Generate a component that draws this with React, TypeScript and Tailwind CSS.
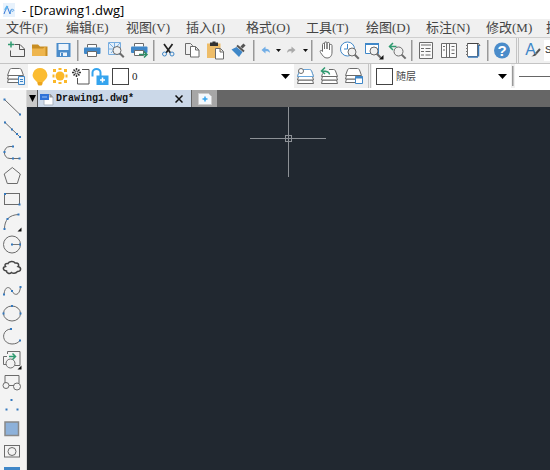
import type { ReactNode } from "react"

interface IconProps {
  children: ReactNode
  width?: number
  height?: number
}

interface ToolProps {
  label: string
  children: ReactNode
}

const LINE = "#6b6b6b"
const BLUE = "#3f87c8"

function Icon({ children, width = 24, height = 24 }: IconProps) {
  return (
    <svg width={width} height={height} viewBox={`0 0 ${width} ${height}`} fill="none" stroke={LINE} aria-hidden="true">
      {children}
    </svg>
  )
}

function Tool({ label, children }: ToolProps) {
  return (
    <button type="button" aria-label={label} title={label} className="h-6 w-6 shrink-0 hover:bg-sky-100">
      <Icon>{children}</Icon>
    </button>
  )
}

// 20px buttons: undo/redo and the layer state toggles
function SmallTool({ label, children }: ToolProps) {
  return (
    <button type="button" aria-label={label} title={label} className="h-6 w-5 shrink-0 hover:bg-sky-100">
      <Icon width={20}>{children}</Icon>
    </button>
  )
}

function Caret({ label }: { label: string }) {
  return (
    <button type="button" aria-label={label} className="h-6 w-[7px] shrink-0">
      <Icon width={7}>
        <path d="M0 11h5l-2.5 3z" fill="#111" stroke="none" />
      </Icon>
    </button>
  )
}

function Separator() {
  return (
    <div className="flex w-1 shrink-0 justify-center self-stretch py-0.5">
      <div className="w-px bg-[#999]" />
      <div className="w-px bg-[#c4c4c4]" />
    </div>
  )
}

function Grip() {
  return (
    <div className="flex w-1.5 shrink-0 justify-center gap-px self-stretch">
      <div className="w-px bg-[#c4c4c4]" />
      <div className="w-px bg-[#c4c4c4]" />
    </div>
  )
}

const menus = [
  { name: "文件", key: "F" },
  { name: "编辑", key: "E" },
  { name: "视图", key: "V" },
  { name: "插入", key: "I" },
  { name: "格式", key: "O" },
  { name: "工具", key: "T" },
  { name: "绘图", key: "D" },
  { name: "标注", key: "N" },
  { name: "修改", key: "M" },
  { name: "扩展工具", key: "X" },
]

function Dots({ points }: { points: number[][] }) {
  return (
    <g fill="#3478bd" stroke="none">
      {points.map(([x, y]) => (
        <rect key={`${x}-${y}`} x={x - 1} y={y - 1} width="2" height="2" />
      ))}
    </g>
  )
}

const drawTools = [
  { label: "Line", icon: <><path d="M4.5 4.5l15.500 15" /><Dots points={[[4.5, 4.5], [20, 19.5]]} /></> },
  { label: "Construction line", icon: <><path d="M4.500 4l15.500 15" /><Dots points={[[5, 4.5], [12, 11.500], [17, 16], [20, 19]]} /></> },
  { label: "Polyline", icon: <><path d="M13 5.500H10C2.500 5.500 2.500 17.500 10 17.500H20" /><Dots points={[[13, 5.500], [4.500, 11], [13, 17.500], [19.500, 17.500]]} /></> },
  { label: "Polygon", icon: <path d="M12.300 3.500l8 6.500-3 9.500H7.300L4.200 10z" /> },
  { label: "Rectangle", icon: <><rect x="4.500" y="6.500" width="15" height="11" /><Dots points={[[5, 7], [19.500, 17.500]]} /></> },
  { label: "Arc", icon: <><path d="M4.500 19C4.500 10 9 5 18.500 4.500" /><Dots points={[[4.500, 19], [7.500, 9], [18.500, 4.500]]} /><path d="M21.500 17.500v4h-4z" fill="#111" stroke="none" /></> },
  { label: "Circle", icon: <><circle cx="12" cy="11.500" r="8.500" /><path d="M12 11.500h8" stroke="#777" /><Dots points={[[12, 11.500], [20, 11.500]]} /></> },
  { label: "Revision cloud", icon: <path d="M8 7.500C9 5 14 5 15 7C18.500 6.500 19.500 9 18 10.500C22 11.500 21 15.500 17.500 15.500C15.500 18 12.500 17.500 11.500 16.500C9.500 18.500 6.500 17 6.500 15C2.500 14.500 2.500 11 5.500 10.500C4 8.500 6 7 8 7.500z" stroke="#444" strokeWidth="1.500" /> },
  { label: "Spline", icon: <><path d="M4 15C5 7 9.500 7 12 12C14.500 17 19.500 17 20.500 8" /><Dots points={[[4, 15.500], [12, 12], [20.500, 8]]} /></> },
  { label: "Ellipse", icon: <><ellipse cx="12" cy="11.500" rx="8.500" ry="7.500" /><Dots points={[[12, 4], [3.500, 11.500], [20.500, 11.500]]} /></> },
  { label: "Ellipse arc", icon: <><path d="M11 4C1 4.500 1 18.500 12 19C16 19 18.500 17.500 20 15.500" /><Dots points={[[11, 4], [20, 15.500]]} /></> },
  {
    label: "Insert block",
    icon: (
      <>
        <path d="M7.500 6V3.500h12.500v14H15M7 8.500H3.500v8h3" />
        <circle cx="10.500" cy="15.500" r="4.500" fill="#f3f3f3" />
        <path d="M9 8.500h6M12.500 5.500l3 3-3 3" stroke="#2f9a70" strokeWidth="1.500" />
        <path d="M21.500 17.500v4h-4z" fill="#111" stroke="none" />
      </>
    ),
  },
  {
    label: "Make block",
    icon: (
      <>
        <path d="M5 12V4.500h14V12M9 14.500h5" />
        <circle cx="6" cy="14.500" r="3" />
        <circle cx="17" cy="15.500" r="3.500" />
      </>
    ),
  },
  { label: "Point", icon: <Dots points={[[11.500, 6], [6.500, 15.500], [17.500, 15.500]]} /> },
  { label: "Hatch", icon: <rect x="5" y="5" width="13.500" height="13.500" fill="#8db1da" stroke="#888" strokeWidth="1.500" /> },
  { label: "Region", icon: <><rect x="4.500" y="5.500" width="15" height="11.500" /><circle cx="12" cy="11.500" r="4" /></> },
  { label: "Table", icon: <><path d="M4.500 5.500h15v14h-15zM4.500 13h15M12 8v12" /><path d="M4 4h16v4H4z" fill={BLUE} stroke="none" /></> },
]

function Magnifier({ x, y, r = 4.5 }: { x: number; y: number; r?: number }) {
  return (
    <>
      <circle cx={x} cy={y} r={r} fill="#f0f0f0" />
      <path d={`M${x + r * 0.7} ${y + r * 0.7}l4 4`} strokeWidth="2" />
    </>
  )
}

function TitleBar() {
  return (
    <header className="flex h-[19px] shrink-0 items-center bg-white pl-[3px]">
      <Icon width={12} height={16}>
        <rect width="12" height="14" y="1" fill="#e8f2fc" stroke="none" />
        <path d="M1 12L4 4l3 8 1-4" stroke="#3a78d6" />
        <path d="M2 8l2.500-4" stroke="#5fb4ee" strokeWidth="2" />
        <path d="M7 12l1-4.500c3-1 4 1.500 1 2" stroke="#63a6e6" />
      </Icon>
      <h1 className="ml-[7px] whitespace-nowrap font-['Open_Sans','Noto_Sans',sans-serif] text-[13px] leading-[18px] text-black">
        - [Drawing1.dwg]
      </h1>
    </header>
  )
}

function MenuBar() {
  return (
    <nav className="flex h-[19px] shrink-0 items-center overflow-hidden border-b border-[#cfcfcf] pl-1.5">
      {menus.map((menu) => (
        <button
          key={menu.key}
          type="button"
          className="w-15 shrink-0 whitespace-nowrap text-left font-['Liberation_Serif','Noto_Sans_CJK_SC',serif] text-[13px] leading-[18px] text-[#444]"
        >
          {menu.name}({menu.key})
        </button>
      ))}
    </nav>
  )
}

function StandardToolbar() {
  return (
    <div role="toolbar" aria-label="Standard" className="flex h-[26px] shrink-0 overflow-hidden border-b border-[#c4c4c4] pl-1">
      <Tool label="New">
        <path d="M10.500 6.500h5.500l4.500 4.500v7.500h-14v-6M15.500 6.500v5h5" stroke="#555" />
        <path d="M7 3.500v6M4 6.500h6" stroke="#2f9a70" strokeWidth="1.500" />
      </Tool>
      <Tool label="Open">
        <path d="M4 6.500h6l2 2h7.500V18H4z" fill="#c88d22" stroke="none" />
        <path d="M4 10.500h11l2.500-2V18H4z" fill="#eeb54d" stroke="none" />
      </Tool>
      <Tool label="Save">
        <path d="M4.500 5h14v14h-14z" fill="#4b8cca" stroke="none" />
        <path d="M6.500 6h10v6h-10zM8 14.500h7V18H8z" fill="#edf4fb" stroke="none" />
        <path d="M9 15h2v3H9z" fill="#4b8cca" stroke="none" />
      </Tool>
      <Separator />
      <Tool label="Print">
        <path d="M7.500 9.500v-3h9v3" fill="#fff" />
        <rect x="4" y="9.500" width="16.500" height="6.500" rx="1" fill={BLUE} stroke="none" />
        <path d="M7.500 13.500h9v5h-9z" fill="#fff" />
      </Tool>
      <Tool label="Print preview">
        <path d="M4.500 4.500h12v12h-12z" fill="#e3effa" stroke="#79aee0" />
        <path d="M5 5l6 6M16 5l-9 10M10.500 5v6H5" stroke="#79aee0" />
        <Magnifier x={13} y={12.500} r={4} />
      </Tool>
      <Tool label="Plot">
        <path d="M6.500 8.500v-3h9v3" fill="#fff" />
        <rect x="3" y="8.500" width="16.500" height="6.500" rx="1" fill={BLUE} stroke="none" />
        <path d="M6.500 12.500h9v5h-9z" fill="#fff" />
        <path d="M11 16.500h8M16 13.500l3 3-3 3" stroke="#2f8f68" strokeWidth="1.500" />
      </Tool>
      <Separator />
      <Tool label="Cut">
        <path d="M8 6l6.500 9M16.500 6L10 15" stroke="#222" strokeWidth="1.700" />
        <circle cx="8.500" cy="16" r="2" stroke={BLUE} />
        <circle cx="16" cy="16" r="2" stroke={BLUE} />
      </Tool>
      <Tool label="Copy">
        <path d="M10 16.500H5.500v-11h5l2 2v1.500" />
        <path d="M10.500 8.500h5l3.500 3.500v7h-8.500zM15.500 8.500v3.500H19" fill="#fff" />
      </Tool>
      <Tool label="Paste">
        <path d="M3 5.500h13.500V20H3z" fill="#eebd69" stroke="none" />
        <path d="M6 4.500h2.500V3.500h3v1h2.500v3.500H6z" fill="#333" stroke="none" />
        <path d="M11.500 10.500h5l3 3v7.500h-8zM16 10.500v3.500h3.500" fill="#fff" />
      </Tool>
      <Tool label="Match properties">
        <path d="M16.500 6.500l-3 3" stroke="#555" strokeWidth="3" />
        <path d="M9 7.500l7 6" stroke="#555" strokeWidth="2" />
        <path d="M8.500 9l6 5-3.500 5L3.500 11.500z" fill={BLUE} stroke="none" />
      </Tool>
      <Separator />
      <SmallTool label="Undo">
        <path d="M5.500 12l4-3.500v2.200c3 0 4.500 1.500 4.500 4.300-1-1.500-2.500-2-4.500-1.700v2.200z" fill="#72aee6" stroke="none" />
      </SmallTool>
      <Caret label="Undo history" />
      <SmallTool label="Redo">
        <path d="M12.500 12l-4-3.500v2.200c-3 0-4.500 1.500-4.500 4.300 1-1.500 2.500-2 4.500-1.700v2.200z" fill="#aaa" stroke="none" />
      </SmallTool>
      <Caret label="Redo history" />
      <Separator />
      <Tool label="Pan">
        <path
          d="M8.500 13.500V6.500c0-1.500 2-1.500 2 0V11V5c0-1.500 2.500-1.500 2.500 0v6V5.500c0-1.500 2.500-1.500 2.500 0V12V7.500c0-1.500 2.500-1.500 2.500 0V14c0 4-2 6-5 6-3 0-4-2-6.500-5.500-1-2 .5-3 2-1z"
          fill="#fff"
        />
      </Tool>
      <Tool label="Zoom realtime">
        <circle cx="9.500" cy="11" r="7" fill="#fff" stroke={BLUE} />
        <path d="M9.500 6v5H6" stroke={BLUE} />
        <Magnifier x={14} y={14} r={4} />
      </Tool>
      <Tool label="Zoom window">
        <path d="M3.500 5.500h13v10h-13z" fill="#fff" stroke={BLUE} />
        <path d="M3 6h14" stroke={BLUE} strokeWidth="2" />
        <Magnifier x={12} y={13} r={4} />
        <path d="M21.500 17v4.500H17z" fill="#111" stroke="none" />
      </Tool>
      <Tool label="Zoom previous">
        <Magnifier x={12.500} y={13.500} />
        <path d="M10.500 8.500H3.500M7 5L3.500 8.500 7 12" stroke="#2f9a70" strokeWidth="1.500" />
      </Tool>
      <Separator />
      <Tool label="Properties">
        <path d="M5.500 4.500h13v16h-13z" fill="#fafafa" />
        <path d="M7 7h10M7 10.500h3M11.500 10.500h5M7 13.500h3M11.500 13.500h5M7 17h3M11.500 17h5" />
      </Tool>
      <Tool label="Design center">
        <path d="M3.500 5.500h15v14h-15zM8.500 5.500v14M11.500 5.500v14M13.500 8.500h3M13.500 12h3M13.500 15.500h3M5 8.500h2M5 12h2" fill="#fafafa" />
      </Tool>
      <Tool label="Tool palettes">
        <path d="M5.500 5.500h10v13h-10z" fill="#fff" />
        <path d="M5.500 5.500h11l1.500 2.500" stroke="#444" />
        <path d="M4 7.500h2M4 10.500h2M4 13.500h2M4 16.500h2" stroke="#777" />
        <path d="M16.500 7v11.500M6 19h10" stroke="#3a78b8" strokeWidth="1.500" />
      </Tool>
      <Separator />
      <Tool label="Help">
        <circle cx="12" cy="12.500" r="8" fill="#4b8cca" stroke="none" />
        <text x="12" y="18" textAnchor="middle" fontSize="15" fontWeight="700" fontFamily="Liberation Sans, sans-serif" fill="#fff" stroke="none">
          ?
        </text>
      </Tool>
      <Grip />
      <Tool label="Text style">
        <text x="10.500" y="17" textAnchor="middle" fontSize="16" fontFamily="Liberation Sans, sans-serif" fill={BLUE} stroke="none">
          A
        </text>
        <path d="M20 11l-4 4.500" stroke="#555" strokeWidth="2" />
        <path d="M11 18.500c2 0 2.500-3 4.500-3s1.500 3-4.500 3z" fill="#555" stroke="none" />
      </Tool>
      <select aria-label="Text style name" className="my-0.5 min-w-20 flex-1 appearance-none bg-white pl-px font-['Liberation_Mono',monospace] text-[11px] text-[#333]">
        <option>Standard</option>
      </select>
    </div>
  )
}

function LayerStack({ y = 0 }: { y?: number }) {
  return (
    <g transform={`translate(0 ${y})`} fill="#fff">
      <path d="M4.500 16l-1 3.500h16l-1-3.500z" />
      <path d="M4.500 12.500l-1 3.500h16l-1-3.500z" />
      <path d="M7.500 5.500h8c1 0 1.500.5 2 1.500l2 5.500h-16l2-5.500c.5-1 1-1.500 2-1.500z" />
    </g>
  )
}

function DropArrow() {
  return (
    <span className="pointer-events-none absolute inset-y-0 right-1 flex items-center">
      <svg width="9" height="5" viewBox="0 0 9 5" aria-hidden="true">
        <path d="M0 0h9L4.500 5z" fill="#000" />
      </svg>
    </span>
  )
}

function LayerToolbar() {
  return (
    <div role="toolbar" aria-label="Layers" className="flex h-[26px] shrink-0 overflow-hidden border-b-2 border-white pl-1">
      <Tool label="Layer manager">
        <LayerStack y={-1} />
        <path d="M14.500 12.500h6v8h-6z" fill="#e8f2fc" stroke={BLUE} />
        <path d="M16 15.500h3M16 17.500h3" stroke={BLUE} />
      </Tool>
      <div className="flex w-[266px] shrink-0 bg-white pl-0.5">
        <SmallTool label="Layer on">
          <path d="M10 4a7.500 7 0 0 1 5 12l-2.500 2.500h-5L5 16A7.500 7 0 0 1 10 4z" fill="#fbbc31" stroke="none" />
          <path d="M7.500 18h5v2l-1 1.500h-3l-1-1.500z" fill="#eba41c" stroke="none" />
        </SmallTool>
        <SmallTool label="Layer frozen">
          <circle cx="10" cy="12" r="4.500" fill="#fbb829" stroke="none" />
          <path d="M3 5h3v3H3zM14 5h3v3h-3zM3 16h3v3H3zM14 16h3v3h-3zM8.500 4h3v2h-3zM8.500 18h3v2h-3zM2.500 10.500h2v3h-2zM15.500 10.500h2v3h-2z" fill="#fbb829" stroke="none" />
        </SmallTool>
        <SmallTool label="Viewport frozen">
          <path d="M12 5.500h7v14.500H7.500v-6" stroke="#555" />
          <path d="M6.500 4v2M6.500 13v-2M2 8.500h2M11 8.500H9M3.500 5.500L5 7M9.500 5.500L8 7M3.500 11.500L5 10M9.500 11.500L8 10" stroke="#333" strokeWidth="1.500" />
          <circle cx="6.500" cy="8.500" r="1.500" stroke="#444" />
        </SmallTool>
        <SmallTool label="Layer unlocked">
          <path d="M2.500 12.500V8.500a4 3.500 0 0 1 8 0V12" stroke="#35a4ee" strokeWidth="2" />
          <rect x="6.500" y="11.500" width="12" height="9.500" fill="#35a4ee" stroke="none" />
          <path d="M12.500 13.500v5M10 16h5" stroke="#fff" strokeWidth="1.500" />
        </SmallTool>
        <SmallTool label="Layer color">
          <rect x="2.500" y="4.500" width="16" height="16" fill="#fff" stroke="#444" />
        </SmallTool>
        <div className="relative flex flex-1">
          <select aria-label="Current layer" className="w-full appearance-none pl-0.5 font-['Liberation_Serif',serif] text-[11px] text-[#222]">
            <option>0</option>
          </select>
          <DropArrow />
        </div>
      </div>
      <Tool label="Make object layer current">
        <LayerStack />
        <path d="M7.500 5.500h8c1 0 1.500.5 2 1.500l2 5.500h-16l2-5.500" stroke="#6aa7dc" fill="#fff" />
        <circle cx="7" cy="7" r="2.500" fill="#fff" />
      </Tool>
      <Tool label="Layer previous">
        <LayerStack />
        <path d="M3 4h8v5.500H3z" fill="#f0f0f0" stroke="none" />
        <path d="M11.500 10.500C11.500 8 9.500 7 4 7M7 3.500L3.500 7 7 10" stroke="#2f9a70" strokeWidth="1.500" />
      </Tool>
      <Tool label="Layer states">
        <LayerStack y={-1} />
        <path d="M13.500 12.500h7v7h-7z" fill="#fff" stroke={BLUE} />
        <path d="M13 13.500h8" stroke={BLUE} strokeWidth="2" />
      </Tool>
      <Grip />
      <div className="flex w-[139px] shrink-0 items-center bg-white pl-1">
        <span className="h-[17px] w-[17px] shrink-0 border border-[#444] bg-white" />
        <div className="relative flex flex-1 self-stretch">
          <select
            aria-label="Color"
            className="w-full appearance-none pl-[3px] font-['Liberation_Serif','Noto_Sans_CJK_SC',serif] text-[10px] text-[#444]"
          >
            <option>随层</option>
          </select>
          <DropArrow />
        </div>
      </div>
      <Separator />
      <button type="button" aria-label="Linetype" className="flex min-w-24 flex-1 items-center bg-white pl-1">
        <span className="h-px w-full bg-[#666]" />
      </button>
    </div>
  )
}

function DrawToolbar() {
  return (
    <aside role="toolbar" aria-label="Draw" className="flex w-[27px] shrink-0 flex-col overflow-hidden border-r border-[#d9d9d9] bg-[#f3f3f3] pt-[5px]">
      {drawTools.map((tool) => (
        <button key={tool.label} type="button" aria-label={tool.label} title={tool.label} className="h-[23px] w-6 shrink-0 hover:bg-sky-100">
          <Icon height={23}>{tool.icon}</Icon>
        </button>
      ))}
    </aside>
  )
}

function TabStrip() {
  return (
    <div className="flex h-[17px] shrink-0 bg-[#666]">
      <button type="button" aria-label="Drawing list" className="flex w-[11px] items-center justify-center border-r border-[#555] bg-[#c9c9c9]">
        <svg width="7" height="7" viewBox="0 0 7 7" aria-hidden="true">
          <path d="M0 0h7L3.500 7z" fill="#000" />
        </svg>
      </button>
      <div className="flex w-[153px] items-center bg-[#cbd8e8] pl-0.5">
        <Icon width={14} height={16}>
          <path d="M4 3.500h6l3 3v7.500H4z" fill="#fff" stroke="#aab4c0" />
          <path d="M0 3h9v6H0z" fill="#2f72d8" stroke="none" />
          <path d="M2 6h5" stroke="#9cc2f5" />
          <path d="M9.500 3h1l3 3.500h-4z" fill="#999" stroke="none" />
        </Icon>
        <a href="#drawing1" className="ml-0.5 flex-1 font-['Liberation_Mono',monospace] text-[10px] leading-4 font-bold text-[#111]">
          Drawing1.dwg*
        </a>
        <button type="button" aria-label="Close tab" className="flex h-4 w-6 items-center justify-center">
          <svg width="8" height="8" viewBox="0 0 8 8" stroke="#111" strokeWidth="1.500" aria-hidden="true">
            <path d="M.5.5l7 7M7.500.5l-7 7" />
          </svg>
        </button>
      </div>
      <button type="button" aria-label="New tab" className="flex w-[26px] items-center justify-center border-l border-[#666] bg-[#a6a6a6]">
        <Icon width={14} height={12}>
          <path d="M.5.500h10l3 3v8H.5z" fill="#f4f8fc" stroke="#ccc" />
          <path d="M7 3.500v5M4.500 6h5" stroke="#35a4ee" strokeWidth="1.500" />
        </Icon>
      </button>
    </div>
  )
}

export default function App() {
  return (
    <div className="flex h-screen flex-col overflow-hidden bg-[#f0f0f0]">
      <TitleBar />
      <MenuBar />
      <StandardToolbar />
      <LayerToolbar />
      <div className="flex min-h-0 flex-1">
        <DrawToolbar />
        <main className="flex min-w-0 flex-1 flex-col">
          <TabStrip />
          <div className="relative flex-1 bg-[#212830]">
            <svg className="absolute top-0 left-[223px]" width="76" height="70" viewBox="0 0 76 70" fill="none" stroke="#8d9196" aria-hidden="true">
              <path d="M0 31.500h76M38.500 0v70" />
              <rect x="35.500" y="28.500" width="6" height="6" />
            </svg>
          </div>
        </main>
      </div>
    </div>
  )
}
